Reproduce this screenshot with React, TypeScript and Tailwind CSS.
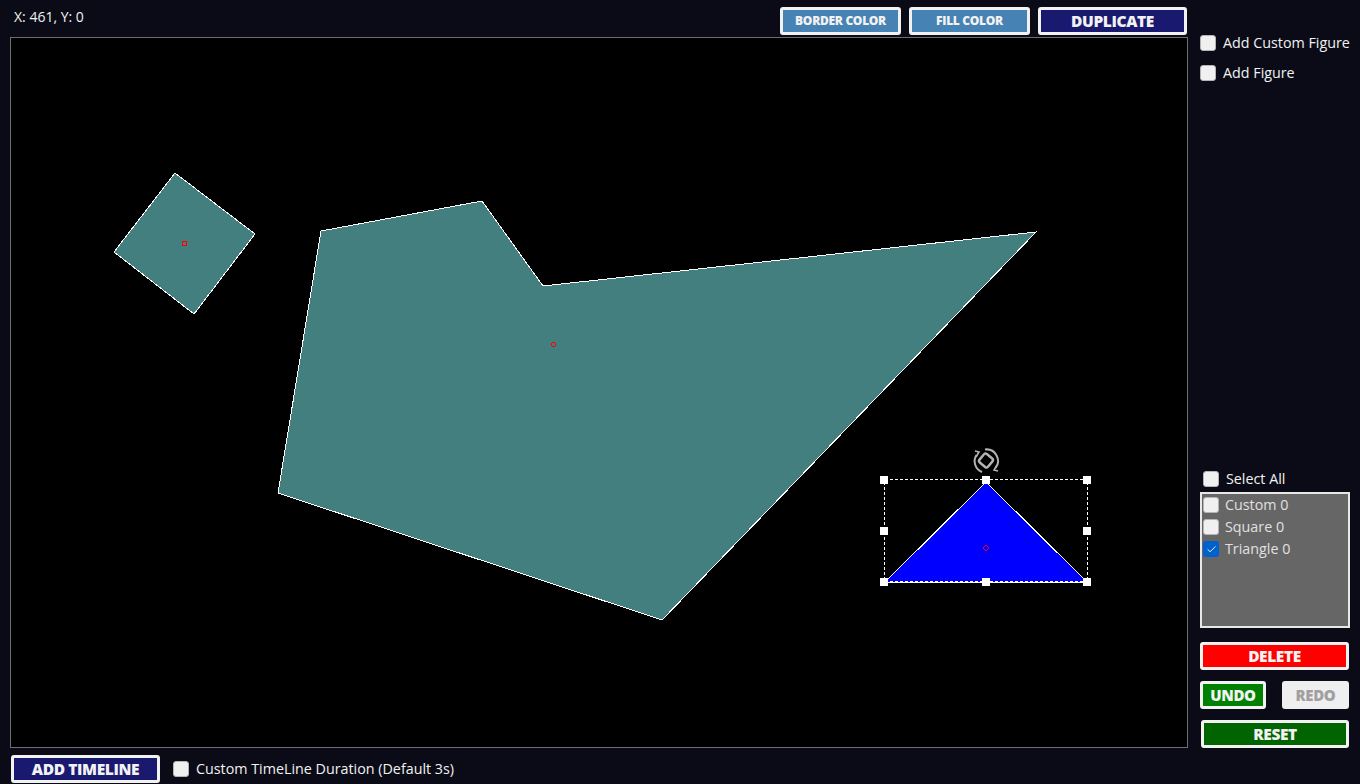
import { Check } from 'lucide-react';

type BoxProps = { label: string; checked?: boolean; tight?: boolean };

function CheckRow({ label, checked, tight }: BoxProps) {
  return (
    <label className={tight ? 'flex h-5 items-center gap-[6px] whitespace-nowrap' : 'flex h-5 items-center gap-[7px] whitespace-nowrap'}>
      <span
        className={
          checked
            ? 'flex h-4 w-4 items-center justify-center rounded-[3px] bg-[#0060cc] text-white'
            : 'h-4 w-4 rounded-[3px] border border-[#b4b4b4] bg-[#f0f0f0]'
        }
      >
        {checked && <Check size={11} strokeWidth={2} />}
      </span>
      <span>{label}</span>
    </label>
  );
}

const btn = 'h-7 rounded-[3px] border-[3px] border-[#f2f2f2] font-extrabold tracking-tight text-[#f2f2f2]';

function Canvas() {
  return (
    <svg viewBox="11 38 1176 709" className="block h-[709px] w-[1176px]">
      <g shapeRendering="crispEdges">
        <polygon points="175,173 255,234 194,314 114,252" fill="#447f7f" stroke="#fff" />
        <rect x="182" y="241" width="4" height="4" fill="none" stroke="#f00" />
        <polygon points="321,231 482,201 543,286 1036,232 662,620 278,493" fill="#447f7f" stroke="#fff" />
        <circle cx="553.5" cy="344.5" r="2" fill="none" stroke="#f00" />
        <polygon points="986,482 1087,582 885,582" fill="#0000ff" stroke="#fff" />
        <circle cx="986" cy="548" r="2.2" fill="none" stroke="#f00" />
        <rect x="884.5" y="479.5" width="203" height="102" fill="none" stroke="#fff" strokeDasharray="3 2" />
        {[
          [884, 480],
          [986, 480],
          [1087, 480],
          [884, 531],
          [1087, 531],
          [884, 582],
          [986, 582],
          [1087, 582],
        ].map(([x, y]) => (
          <rect key={`${x}-${y}`} x={x - 4} y={y - 4} width="8" height="8" fill="#fff" />
        ))}
      </g>
      {/* rotate handle */}
      <g fill="none" stroke="#b4b4b4" strokeWidth="2">
        <path d="M976.5 455 A11.5 11.5 0 0 0 982 472" />
        <path d="M985 449.5 A11.5 11.5 0 0 1 995.5 468" />
        <rect x="980.5" y="455" width="11" height="11" rx="2" transform="rotate(40 986 460.5)" strokeWidth="2.4" />
        <path d="M975 451 L979 452 L976 457" strokeWidth="1.6" />
        <path d="M998 471 L994 470 L997 465" strokeWidth="1.6" />
      </g>
    </svg>
  );
}

export default function App() {
  return (
    <div className="flex h-[784px] w-[1360px] overflow-hidden bg-[#0a0b16] font-['Open_Sans',sans-serif] text-[14.3px] leading-5 text-[#f2f2f2]">
      <div className="ml-[10px] w-[1178px] shrink-0">
        <div className="flex h-[37px] items-start justify-between pt-[7px]">
          <span className="ml-1 text-[14px]">X: 461, Y: 0</span>
          <div className="mr-[1px] flex gap-2">
            <button className={`${btn} w-[121px] bg-[#4682b4] text-[12px]`}>BORDER COLOR</button>
            <button className={`${btn} w-[121px] bg-[#4682b4] text-[12px]`}>FILL COLOR</button>
            <button className={`${btn} w-[149px] bg-[#191970] text-[15.5px]`}>DUPLICATE</button>
          </div>
        </div>
        <div className="h-[711px] border border-[#6e6e6e] bg-black">
          <Canvas />
        </div>
        <div className="mt-[7px] flex items-center gap-[13px]">
          <button className={`${btn} ml-[1px] w-[149px] bg-[#191970] text-[15.5px]`}>ADD TIMELINE</button>
          <CheckRow label="Custom TimeLine Duration (Default 3s)" />
        </div>
      </div>
      <div className="ml-3 flex w-[150px] flex-col">
        <div className="mt-[33px] flex flex-col gap-[10px]">
          <CheckRow label="Add Custom Figure" />
          <CheckRow label="Add Figure" />
        </div>
        <div className="mt-[386px] ml-[3px]">
          <CheckRow label="Select All" />
        </div>
        <div className="mt-[3px] flex h-[136px] flex-col gap-[2px] border-2 border-[#e8e8e8] bg-[#666666] px-[1px] py-[1px] text-[#e0e0e0]">
          <CheckRow tight label="Custom 0" />
          <CheckRow tight label="Square 0" />
          <CheckRow tight label="Triangle 0" checked />
        </div>
        <button className={`${btn} mt-[14px] w-[149px] bg-[#ff0000] text-[15.5px]`}>DELETE</button>
        <div className="mt-[11px] flex w-[149px] justify-between">
          <button className={`${btn} w-[66px] bg-[#008000] text-[15px]`}>UNDO</button>
          <button className="h-7 w-[67px] rounded-[3px] bg-[#efefef] text-[15px] font-extrabold tracking-tight text-[#a0a0a0]">REDO</button>
        </div>
        <button className={`${btn} mt-[11px] ml-[1px] w-[148px] bg-[#006400] text-[15.5px]`}>RESET</button>
      </div>
    </div>
  );
}
